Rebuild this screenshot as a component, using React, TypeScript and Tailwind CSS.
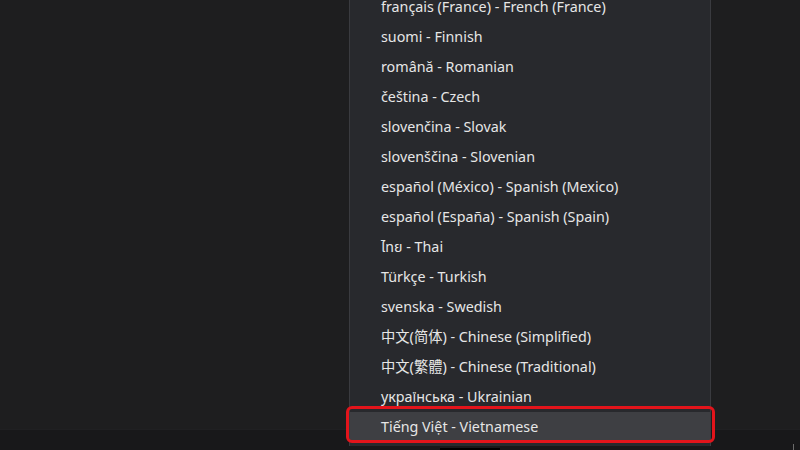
import { useState } from "react";

type Lang = { id: string; label: string };

const langs: Lang[] = [
  { id: "fr-FR", label: "français (France) - French (France)" },
  { id: "fi", label: "suomi - Finnish" },
  { id: "ro", label: "română - Romanian" },
  { id: "cs", label: "čeština - Czech" },
  { id: "sk", label: "slovenčina - Slovak" },
  { id: "sl", label: "slovenščina - Slovenian" },
  { id: "es-MX", label: "español (México) - Spanish (Mexico)" },
  { id: "es-ES", label: "español (España) - Spanish (Spain)" },
  { id: "th", label: "ไทย - Thai" },
  { id: "tr", label: "Türkçe - Turkish" },
  { id: "sv", label: "svenska - Swedish" },
  { id: "zh-CN", label: "中文(简体) - Chinese (Simplified)" },
  { id: "zh-TW", label: "中文(繁體) - Chinese (Traditional)" },
  { id: "uk", label: "українська - Ukrainian" },
  { id: "vi", label: "Tiếng Việt - Vietnamese" },
];

export default function App() {
  const [active, setActive] = useState("vi");

  return (
    <div
      className="relative flex h-[450px] w-[800px] flex-col overflow-hidden bg-[#1e1e1f]"
      style={{ fontFamily: '"Noto Sans", "Noto Sans Thai", "Noto Sans CJK SC", sans-serif' }}
    >
      <div className="flex-1" />
      <div className="relative h-[21px] border-t border-[#202022] bg-[#18181a]">
        <div className="absolute left-[440px] top-[18px] h-[3px] w-[60px] bg-black" />
        <div className="absolute left-[793px] top-[14px] h-[7px] w-px bg-[#6b6b6b]" />
      </div>

      <ul className="absolute left-[349px] top-[-12px] w-[362px] border-x border-[#3a3b3f] bg-[#28292d] py-1">
        {langs.map((l) => {
          const on = l.id === active;
          return (
            <li
              key={l.id}
              onClick={() => setActive(l.id)}
              className={
                "relative flex h-[30px] cursor-default items-center pl-[31px] text-[14.3px] text-[#e6e6e6] " +
                (on ? "bg-[#3e3f43]" : "")
              }
            >
              {on && (
                <span className="pointer-events-none absolute -left-[4px] -right-[5px] -top-[6px] -bottom-[1px] rounded-[6px] border-[3px] border-[#e3141b]" />
              )}
              <span className="relative">{l.label}</span>
            </li>
          );
        })}
      </ul>
    </div>
  );
}
